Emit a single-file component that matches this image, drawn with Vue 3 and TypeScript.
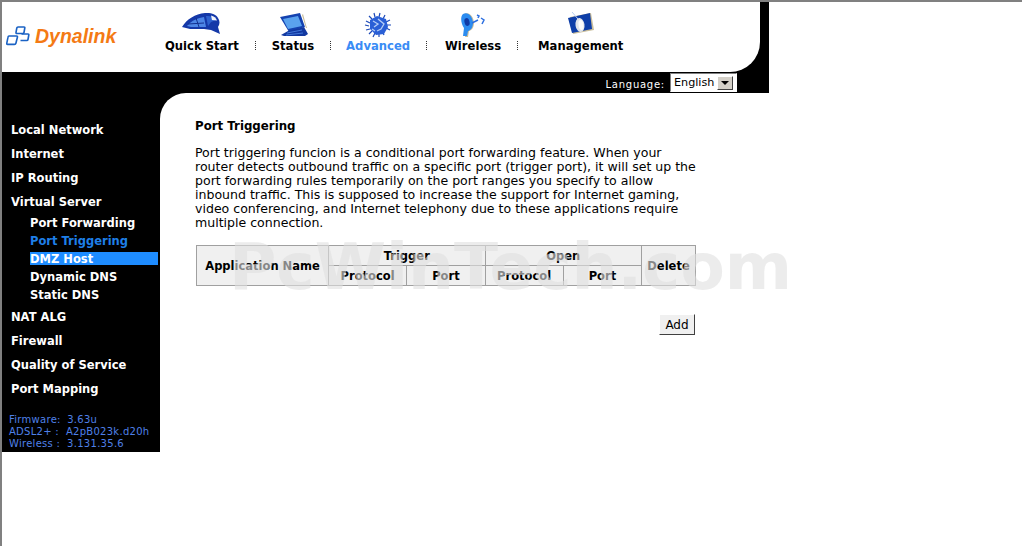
<template>
  <div class="page">
    <div class="frame">
      <!-- top bar -->
      <div class="top-wrap">
        <header class="top">
          <div class="logo">
            <svg width="24" height="20" viewBox="0 0 24 20" class="logo-mark">
              <g fill="none" stroke="#1a62c4" stroke-width="1.6" stroke-linejoin="round">
                <path d="M3 10h7.5q1.2 0 .9 1.2l-1.5 6q-.3 1.2-1.5 1.2H1.6q-1.1 0-.8-1.2l1.2-6q.2-1.2 1-1.2z" />
                <path d="M12 1h6q1 0 .8 1l-.8 4.5q-.2 1-1.2 1h-6q-1 0-.8-1l.8-4.5q.2-1 1.2-1z" />
                <path d="M15.500 8h6.500q1 0 .8 1l-.8 4.500q-.2 1-1.200 1H14.500" />
              </g>
            </svg>
            <span class="logo-text">Dynalink</span>
          </div>
          <nav class="nav">
            <template v-for="(item, i) in navItems" :key="item.label">
              <span v-if="i > 0" class="nav-sep"></span>
              <a class="nav-item" :class="[item.cls, { active: item.label === 'Advanced' }]">
                <span class="nav-icon">
                  <svg v-if="item.icon === 'quick'" width="40" height="24" viewBox="0 0 40 24">
                    <path d="M0 15C5 7 13 2 23 1c6-.5 11 1 13 5 2 3 2 6 0 9l2 7-9-4-7-1H8l-4-1z" fill="#1438a8" />
                    <path d="M5 14c5-6 11-8 17-9l2 10H9z" fill="#4d86e6" />
                    <path d="M24 4c4-.5 8 1 10 4l-5 2-3 4z" fill="#2e62cf" />
                    <path d="M29 3.500c3 .5 5 2.500 6 5l-5-.5z" fill="#f2f4fb" />
                    <path d="M14 6l3 9M6 12l16-1" stroke="#12308f" stroke-width="1" fill="none" />
                  </svg>
                  <svg v-else-if="item.icon === 'status'" width="30" height="26" viewBox="0 0 30 26">
                    <path d="M2 5L22 1l5 14-16 5z" fill="#1442b0" />
                    <path d="M5 7l15-3 4 10-14 3z" fill="#5aa2ee" />
                    <path d="M10 19l16-4 4 7-3 2H6l-3-1z" fill="#1238a0" />
                    <path d="M9 21l15-3M8 23l17-2" stroke="#4d86e6" stroke-width=".8" />
                    <path d="M25 2l3 11 1 3-1 0-4-13z" fill="#c9bd9a" />
                  </svg>
                  <svg v-else-if="item.icon === 'advanced'" width="28" height="26" viewBox="0 0 28 26">
                    <g stroke="#1c48b8" stroke-width="1.2">
                      <path d="M2 9l4 2M1 13l4 1M2 18l4-1M5 22l3-3M9 25l2-4M15 25l0-4M20 23l-2-4M26 18l-4-2M27 13l-4 0M26 8l-4 2M21 3l-2 4M16 1l-1 4M10 1l1 4M5 4l3 3" />
                    </g>
                    <path d="M6 8l7-4 9 3 2 8-4 7-8 1-6-6z" fill="#2a5fd6" />
                    <path d="M9 9l5 3-4 3M14 7l6 5-3 5-4 2M8 17l3 2" stroke="#b4cdf6" stroke-width="1.3" fill="none" />
                  </svg>
                  <svg v-else-if="item.icon === 'wireless'" width="24" height="25" viewBox="0 0 24 25">
                    <path d="M2 2c5-3 10 3 10 9s-4 8-5 8l-1 6H3l1-8C1 13 0 5 2 2z" fill="#c9bd9a" transform="translate(1 0)" />
                    <path d="M2 2c5-3 10 3 10 9s-4 8-5 8l-1 5H2l1-8C0 12-1 5 2 2z" fill="#2c8cf0" />
                    <ellipse cx="6" cy="10" rx="2.500" ry="4" fill="#0f3aa5" transform="rotate(-15 6 10)" />
                    <path d="M11 11l6-3M16 3l2 1-1 2M20 6l3 2-2 4" stroke="#2c6fe0" stroke-width="1.500" fill="none" />
                  </svg>
                  <svg v-else width="26" height="24" viewBox="0 0 26 24">
                    <path d="M2 5l21-4 3 17-21 4z" fill="#c9bd9a" />
                    <path d="M0 6l22-5 2 16-20 4z" fill="#0e3ea8" />
                    <path d="M4 0l6 7" stroke="#b9cdf0" stroke-width="1" />
                    <ellipse cx="12" cy="13" rx="4.500" ry="7" fill="#dfe3ea" transform="rotate(-8 12 13)" />
                    <ellipse cx="13" cy="13" rx="2.500" ry="5" fill="#fbfbfb" transform="rotate(-8 13 13)" />
                  </svg>
                </span>
                <span class="nav-label">{{ item.label }}</span>
              </a>
            </template>
          </nav>
        </header>
      </div>

      <!-- language strip -->
      <div class="lang-bar">
        <span class="lang-label">Language:</span>
        <div class="lang-select">
          <span class="lang-value">English</span>
          <span class="lang-btn"><i></i></span>
        </div>
      </div>

      <div class="body">
        <aside class="side">
          <ul class="menu">
            <li v-for="m in menu" :key="m.label" class="menu-group">
              <a class="menu-top">{{ m.label }}</a>
              <ul v-if="m.children" class="submenu">
                <li
                  v-for="c in m.children"
                  :key="c"
                  class="sub-item"
                  :class="{ current: c === 'Port Triggering', hover: c === 'DMZ Host' }"
                >{{ c }}</li>
              </ul>
            </li>
          </ul>
          <div class="versions">
            <div class="fw">Firmware: 3.63u</div>
            <div>ADSL2+ :&nbsp; A2pB023k.d20h</div>
            <div>Wireless :&nbsp; 3.131.35.6</div>
          </div>
        </aside>

        <div class="content-wrap">
          <main class="content">
            <h1 class="title">Port Triggering</h1>
            <p class="intro">
              Port triggering funcion is a conditional port forwarding feature. When your
              router detects outbound traffic on a specific port (trigger port), it will set up the
              port forwarding rules temporarily on the port ranges you specify to allow
              inbound traffic. This is supposed to increase the support for Internet gaming,
              video conferencing, and Internet telephony due to these applications require
              multiple connection.
            </p>
            <table class="grid">
              <thead>
                <tr>
                  <th rowspan="2" class="col-app">Application Name</th>
                  <th colspan="2">Trigger</th>
                  <th colspan="2">Open</th>
                  <th rowspan="2" class="col-del">Delete</th>
                </tr>
                <tr>
                  <th class="col-proto">Protocol</th>
                  <th class="col-port">Port</th>
                  <th class="col-proto">Protocol</th>
                  <th class="col-port">Port</th>
                </tr>
              </thead>
            </table>
            <div class="actions">
              <button class="btn" type="button">Add</button>
            </div>
          </main>
        </div>
      </div>
    </div>
    <div class="watermark">PcWinTech.com</div>
  </div>
</template>

<script setup lang="ts">
interface NavItem {
  label: string
  icon: string
  cls: string
}

interface MenuEntry {
  label: string
  children?: string[]
}

const navItems: NavItem[] = [
  { label: 'Quick Start', icon: 'quick', cls: 'n-quick' },
  { label: 'Status', icon: 'status', cls: 'n-status' },
  { label: 'Advanced', icon: 'advanced', cls: 'n-advanced' },
  { label: 'Wireless', icon: 'wireless', cls: 'n-wireless' },
  { label: 'Management', icon: 'management', cls: 'n-management' }
]

const menu: MenuEntry[] = [
  { label: 'Local Network' },
  { label: 'Internet' },
  { label: 'IP Routing' },
  {
    label: 'Virtual Server',
    children: ['Port Forwarding', 'Port Triggering', 'DMZ Host', 'Dynamic DNS', 'Static DNS']
  },
  { label: 'NAT ALG' },
  { label: 'Firewall' },
  { label: 'Quality of Service' },
  { label: 'Port Mapping' }
]
</script>

<style>
html,
body {
  margin: 0;
  background: #fff;
}
</style>

<style scoped>
.page {
  position: relative;
  box-sizing: border-box;
  height: 546px;
  overflow: hidden;
  border-top: 2px solid #808080;
  border-left: 2px solid #808080;
  font-family: "DejaVu Sans", Verdana, sans-serif;
  color: #000;
}

.frame {
  width: 767px;
}

.top-wrap {
  background: #000;
}

.top {
  box-sizing: border-box;
  width: 758px;
  height: 70px;
  background: #fff;
  border-bottom-right-radius: 30px;
  display: flex;
}

.logo {
  width: 163px;
  height: 70px;
  box-sizing: border-box;
  padding: 24px 0 0 4px;
  display: flex;
  align-items: flex-start;
  gap: 5px;
}

.logo-mark {
  flex: none;
}

.logo-text {
  font-family: "Liberation Sans", Arial, sans-serif;
  font-size: 19.5px;
  line-height: 20px;
  font-weight: 700;
  font-style: italic;
  color: #f47a14;
}

.nav {
  display: flex;
  align-items: flex-start;
}

.nav-item {
  display: flex;
  flex-direction: column;
  align-items: center;
  cursor: pointer;
  padding-top: 10px;
}

.nav-icon {
  height: 26px;
  display: flex;
  align-items: flex-start;
  justify-content: center;
}

.nav-label {
  font-size: 11.6px;
  font-weight: 700;
  line-height: 17px;
  white-space: nowrap;
}

.nav-item.active .nav-label {
  color: #3a8cf5;
}

.nav-sep {
  width: 0;
  height: 9px;
  margin-top: 39px;
  border-left: 1px dotted #333;
}

.n-quick { margin-right: 16px; }
.n-status { margin: 0 16px 0 16px; }
.n-advanced { margin: 0 16px 0 15px; }
.n-wireless { margin: 0 16px 0 18px; }
.n-management { margin-left: 20px; }

.lang-bar {
  height: 21px;
  background: #000;
  display: flex;
  justify-content: flex-end;
  align-items: flex-start;
  padding-right: 32px;
}

.lang-label {
  color: #fff;
  font-size: 10px;
  line-height: 12px;
  letter-spacing: 0.75px;
  margin-right: 5px;
  margin-top: 7px;
}

.lang-select {
  box-sizing: border-box;
  width: 67px;
  height: 19px;
  background: #fff;
  border: 1px solid #808080;
  border-right-color: #fff;
  border-bottom-color: #fff;
  display: flex;
  align-items: center;
  justify-content: space-between;
  padding: 0 3px 0 3px;
  margin-top: 1px;
}

.lang-value {
  font-size: 11.2px;
}

.lang-btn {
  box-sizing: border-box;
  width: 16px;
  height: 14px;
  background: #d4d0c8;
  border: 1px solid;
  border-color: #fff #404040 #404040 #fff;
  display: flex;
  align-items: center;
  justify-content: center;
}

.lang-btn i {
  width: 0;
  height: 0;
  border-left: 4px solid transparent;
  border-right: 4px solid transparent;
  border-top: 4px solid #000;
}

.body {
  display: flex;
  align-items: flex-start;
}

.side {
  box-sizing: border-box;
  width: 158px;
  height: 359px;
  flex: none;
  background: #000;
  color: #fff;
  padding: 30px 0 0 9px;
}

.menu,
.submenu {
  list-style: none;
  margin: 0;
  padding: 0;
}

.menu-top {
  display: block;
  height: 24px;
  line-height: 14px;
  font-size: 11.5px;
  font-weight: 700;
  white-space: nowrap;
}

.submenu {
  margin: -5px 0 6px;
}

.sub-item {
  height: 18px;
  line-height: 18px;
  font-size: 11.5px;
  font-weight: 700;
  padding-left: 19px;
  white-space: nowrap;
}

.sub-item.current {
  color: #1e7fe8;
}

.sub-item.hover {
  height: 13px;
  line-height: 14px;
  background: #1e8cff;
  margin: 2px 2px 3px 19px;
  padding-left: 0;
}

.versions {
  margin-top: 8px;
  margin-left: -2px;
  font-size: 10px;
  line-height: 12px;
  letter-spacing: 0.28px;
  color: #4f80e8;
  white-space: nowrap;
}

.fw {
  word-spacing: 3px;
}

.content-wrap {
  flex: 1;
  background: linear-gradient(#000, #000) no-repeat 0 0 / 26px 26px;
}

.content {
  box-sizing: border-box;
  background: #fff;
  border-top-left-radius: 26px;
  min-height: 300px;
  padding: 25px 0 0 35px;
}

.title {
  margin: 0;
  font-size: 11.8px;
  line-height: 16px;
  font-weight: 700;
}

.intro {
  width: 504px;
  margin: 12px 0 15px;
  font-size: 12.55px;
  line-height: 14px;
}

.grid {
  box-sizing: border-box;
  width: 500px;
  margin-left: 1px;
  border-collapse: collapse;
  border: 1px solid #a0a0a0;
  background: #f0f0f0;
  table-layout: fixed;
}

.grid th {
  border: 1px solid #a0a0a0;
  padding: 0;
  height: 19px;
  font-size: 11.5px;
  line-height: 14px;
  font-weight: 700;
  text-align: center;
}

.col-app { width: 131px; }
.col-proto { width: 79px; }
.col-port { width: 78px; }
.col-del { width: 53px; }

.actions {
  width: 500px;
  margin-top: 28px;
  display: flex;
  justify-content: flex-end;
}

.btn {
  box-sizing: border-box;
  width: 36px;
  height: 21px;
  padding: 0;
  font-family: inherit;
  font-size: 12px;
  background: #f0f0f0;
  color: #000;
  border: 1px solid;
  border-color: #fff #404040 #404040 #fff;
}

.watermark {
  position: absolute;
  left: 227px;
  top: 225px;
  font-family: "DejaVu Sans", Verdana, sans-serif;
  font-size: 64.6px;
  line-height: 80px;
  font-weight: 700;
  color: rgba(224, 224, 224, 0.6);
  white-space: nowrap;
  pointer-events: none;
}
</style>
